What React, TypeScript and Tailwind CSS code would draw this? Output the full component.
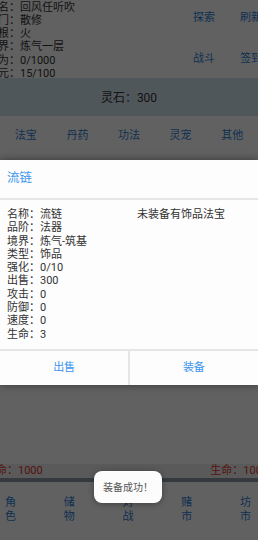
import React from 'react';

const FONT = { fontFamily: 'Roboto, "Noto Sans CJK SC", sans-serif' };

const info = [
  ['姓名', '回风任听吹'],
  ['宗门', '散修'],
  ['灵根', '火'],
  ['境界', '炼气一层'],
  ['修为', '0/1000'],
  ['真元', '15/100'],
];

const tabs = ['法宝', '丹药', '功法', '灵宠', '其他'];

const details = [
  ['名称', '流链'],
  ['品阶', '法器'],
  ['境界', '炼气-筑基'],
  ['类型', '饰品'],
  ['强化', '0/10'],
  ['出售', '300'],
  ['攻击', '0'],
  ['防御', '0'],
  ['速度', '0'],
  ['生命', '3'],
];

const nav = [['角', '色'], ['储', '物'], ['对', '战'], ['赌', '市'], ['坊', '市']];

export default function App() {
  return (
    <div className="relative w-[258px] h-[540px] overflow-hidden bg-white text-[#333]" style={FONT}>
      {/* page underneath */}
      <div className="flex flex-col h-full">
        {/* player info + actions */}
        <div className="flex h-[78px]">
          <div className="flex-1 -ml-[13px] text-[11px] leading-[13.3px] pt-[0.5px] whitespace-nowrap">
            {info.map(([k, v]) => (
              <p key={k}>{k}：{v}</p>
            ))}
          </div>
          <div className="flex flex-col gap-[4px] text-[11px] text-[#2f7fd4] -mr-[4px] whitespace-nowrap">
            <div className="flex h-[38px] items-center gap-[25px]">
              <span>探索</span>
              <span>刷新</span>
            </div>
            <div className="flex h-[38px] items-center gap-[25px]">
              <span>战斗</span>
              <span>签到</span>
            </div>
          </div>
        </div>

        {/* spirit stones */}
        <div className="h-[38px] bg-[#d3e4ee] flex items-center justify-center text-[12px] pt-[1px]">
          灵石：300
        </div>

        {/* category tabs */}
        <div className="grid grid-cols-5 h-[40px] items-center text-center text-[11px] text-[#2f7fd4]">
          {tabs.map(t => (
            <span key={t}>{t}</span>
          ))}
        </div>

        <div className="flex-1" />

        {/* hp row */}
        <div className="flex justify-between h-[14px] items-center text-[11px] text-[#e0352b] bg-[#ececec] whitespace-nowrap">
          <span className="-ml-[15px]">生命：1000</span>
          <span className="-mr-[10px]">生命：1000</span>
        </div>
        <div className="h-[4px] bg-[#8e9aa2]" />

        {/* bottom nav */}
        <div className="h-[58px] -ml-[19px] w-[294px] grid grid-cols-5 text-center text-[11px] leading-[13.5px] text-[#2f7fd4] pt-[14px]">
          {nav.map(([a, b]) => (
            <div key={a + b} className="flex flex-col items-center">
              <span>{a}</span>
              <span>{b}</span>
            </div>
          ))}
        </div>
      </div>

      {/* dim overlay */}
      <div className="absolute inset-0 bg-black/[0.62]" />

      {/* item dialog */}
      <div className="absolute left-0 right-0 top-[160px] bg-[#fdfdfd] shadow-[0_0_8px_rgba(0,0,0,0.45)]">
        <div className="h-[38px] flex items-center px-[7px] text-[12.5px] text-[#3b95ee] pb-[2px]">流链</div>
        <div className="h-[2px] bg-[#e6e6e6]" />
        <div className="flex px-[7px] pt-[8px] pb-[8px] text-[11px] leading-[13.3px] text-[#333]">
          <div className="w-[130px]">
            {details.map(([k, v]) => (
              <p key={k}>{k}：{v}</p>
            ))}
          </div>
          <div>未装备有饰品法宝</div>
        </div>
        <div className="h-[2px] bg-[#e6e6e6]" />
        <div className="flex h-[34px] text-[11px] text-[#3b95ee]">
          <button className="flex-1 flex items-center justify-center">出售</button>
          <div className="w-[1.5px] bg-[#e6e6e6]" />
          <button className="flex-1 flex items-center justify-center">装备</button>
        </div>
      </div>

      {/* toast */}
      <div className="absolute left-[94px] top-[471px] w-[68px] h-[32px] rounded-[8px] bg-[#fcfcfc] shadow-[0_1px_6px_rgba(0,0,0,0.35)] flex items-center justify-center text-[10px] text-[#555]">
        装备成功！
      </div>
    </div>
  );
}
